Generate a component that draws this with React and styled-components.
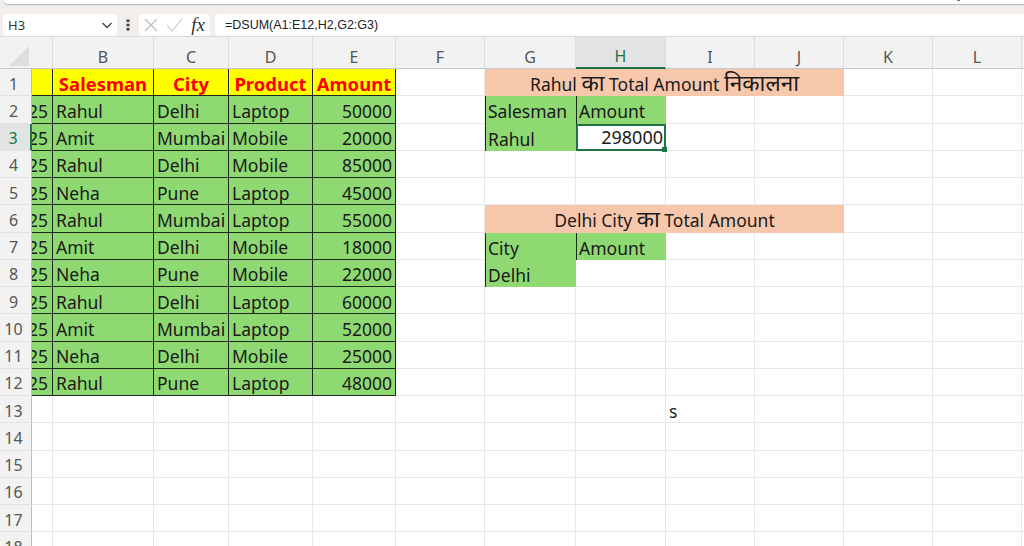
import React from "react";
import styled, { createGlobalStyle } from "styled-components";

const GlobalStyle = createGlobalStyle`
  html, body { margin: 0; padding: 0; background: #f1eeec; overflow: hidden; }
  body { font-family: "Noto Sans", "Liberation Sans", sans-serif; }
`;

const Page = styled.div`
  width: 1024px;
  height: 546px;
  overflow: hidden;
  display: flex;
  flex-direction: column;
`;

const Ribbon = styled.div`
  flex: none;
  position: relative;
  height: 4px;
  margin-left: 4px;
  background: #fff;
  border-radius: 0 0 0 7px;
  box-shadow: 0 1px 1px rgba(0, 0, 0, 0.25);
  &::after {
    content: "";
    position: absolute;
    left: 953px;
    top: 0;
    width: 3px;
    height: 1px;
    background: #777;
  }
`;

const FormulaRow = styled.div`
  flex: none;
  display: flex;
  align-items: center;
  height: 23px;
  margin-top: 9px;
  padding-left: 3px;
  border-bottom: 1px solid #dbd8d6;
`;

const NameBox = styled.div`
  width: 114px;
  height: 22px;
  background: #fff;
  border-radius: 4px;
  display: flex;
  align-items: center;
  justify-content: space-between;
  padding: 0 4px 0 5px;
  box-sizing: border-box;
  font-size: 13px;
  color: #333;
`;

const Dots = styled.div`
  width: 22px;
  display: flex;
  justify-content: center;
`;

const FxBox = styled.div`
  width: 71px;
  height: 22px;
  background: #fff;
  border-radius: 4px;
  display: flex;
  align-items: center;
  justify-content: space-between;
  padding: 0 5px;
  box-sizing: border-box;
  margin-right: 5px;
`;

const Fx = styled.span`
  font-family: "Liberation Serif", serif;
  font-style: italic;
  font-size: 19px;
  line-height: 1;
  color: #333;
`;

const FormulaInput = styled.div`
  flex: 1;
  height: 22px;
  background: #fff;
  border-radius: 4px 0 0 4px;
  display: flex;
  align-items: center;
  padding-left: 10px;
  font-family: "Liberation Sans", sans-serif;
  font-size: 12.5px;
  color: #222;
`;

const Sheet = styled.div`
  flex: none;
  display: grid;
  grid-template-columns: 32px 21px 101px 75px 84px 83px 89px 91px 90px 89px 89px 89px 89px 60px;
  grid-template-rows: 32px repeat(18, 27.25px);
  background: #fff;
`;

const Corner = styled.div`
  background: #f2f2f2;
  border-bottom: 1px solid #c8c8c8;
  position: relative;
  &::after {
    content: "";
    position: absolute;
    right: 3px;
    bottom: 2px;
    border-style: solid;
    border-width: 0 0 20px 20px;
    border-color: transparent transparent #dedede transparent;
  }
`;

const ColHead = styled.div`
  background: ${(p) => (p.$active ? "#e2e4e3" : "#f2f2f2")};
  border-right: 1px solid #dcdcdc;
  border-bottom: ${(p) => (p.$active ? "2px solid #217346" : "1px solid #c8c8c8")};
  color: ${(p) => (p.$active ? "#217346" : "#555")};
  display: flex;
  align-items: center;
  justify-content: center;
  padding-top: 8px;
  font-size: 16px;
  box-sizing: border-box;
`;

const RowHead = styled.div`
  background: ${(p) => (p.$active ? "#e2e4e3" : "#f2f2f2")};
  border-right: ${(p) => (p.$active ? "2px solid #217346" : "1px solid #b8bcc0")};
  border-bottom: 1px solid #e2e2e2;
  color: ${(p) => (p.$active ? "#217346" : "#555")};
  display: flex;
  align-items: center;
  justify-content: center;
  padding: 4px 4px 0 0;
  font-size: 16px;
  line-height: 1.2;
  box-sizing: border-box;
`;

const Cell = styled.div`
  box-sizing: border-box;
  min-width: 0;
  overflow: hidden;
  white-space: nowrap;
  display: flex;
  align-items: center;
  padding: 4px 3px 0;
  font-size: 17.5px;
  line-height: 1.2;
  color: #1a1a1a;
  border-right: 1px solid #e8e8e8;
  border-bottom: 1px solid #e8e8e8;
  justify-content: ${(p) => (p.$right ? "flex-end" : "flex-start")};
`;

const DataCell = styled(Cell)`
  background: #8fd973;
  border-right: 1px solid #1c2a1c;
  border-bottom: 1px solid #1c2a1c;
`;

const HeadCell = styled(DataCell)`
  background: #ffff00;
  color: #ff0000;
  font-weight: 700;
  font-size: 18.5px;
  justify-content: center;
  padding: 3px 0 0;
`;

const DateCell = styled(DataCell)`
  justify-content: flex-end;
  padding: 4px 4px 0 0;
`;

const Banner = styled(Cell)`
  grid-column: span 4;
  background: #f7c7ac;
  border: 0;
  overflow: visible;
  justify-content: center;
  padding-top: 1px;
`;

const Hindi = styled.span`
  font-size: 22.5px;
  line-height: 1;
`;

const GreenCell = styled(Cell)`
  background: #8fd973;
  border-right: 0;
  border-bottom: 0;
  border-left: 1px solid #1c2a1c;
  padding-left: 2px;
`;

const Selected = styled(Cell)`
  position: relative;
  overflow: visible;
  justify-content: flex-end;
  border: 2px solid #217346;
  padding: 2px 1px 0 0;
  font-size: 18px;
  &::after {
    content: "";
    position: absolute;
    right: -3px;
    bottom: -3px;
    width: 5px;
    height: 5px;
    background: #217346;
  }
`;

const columns = ["", "B", "C", "D", "E", "F", "G", "H", "I", "J", "K", "L", ""];

const sales = [
  ["Rahul", "Delhi", "Laptop", 50000],
  ["Amit", "Mumbai", "Mobile", 20000],
  ["Rahul", "Delhi", "Mobile", 85000],
  ["Neha", "Pune", "Laptop", 45000],
  ["Rahul", "Mumbai", "Laptop", 55000],
  ["Amit", "Delhi", "Mobile", 18000],
  ["Neha", "Pune", "Mobile", 22000],
  ["Rahul", "Delhi", "Laptop", 60000],
  ["Amit", "Mumbai", "Laptop", 52000],
  ["Neha", "Delhi", "Mobile", 25000],
  ["Rahul", "Pune", "Laptop", 48000],
];

// cells to the right of the table, F to M, for each row
function RightSide({ row }) {
  if (row === 1 || row === 6) {
    return (
      <>
        <Cell />
        {row === 1 ? (
          <Banner>
            <span>Rahul <Hindi>का</Hindi> Total Amount <Hindi>निकालना</Hindi></span>
          </Banner>
        ) : (
          <Banner>
            <span>Delhi City <Hindi>का</Hindi> Total Amount</span>
          </Banner>
        )}
        <Cell />
        <Cell />
        <Cell />
      </>
    );
  }
  const cells = { 2: ["Salesman", "Amount"], 3: ["Rahul"], 7: ["City", "Amount"], 8: ["Delhi"] }[row];
  return (
    <>
      <Cell />
      {cells ? <GreenCell>{cells[0]}</GreenCell> : <Cell />}
      {row === 3 ? (
        <Selected>298000</Selected>
      ) : cells && cells[1] ? (
        <GreenCell>{cells[1]}</GreenCell>
      ) : (
        <Cell />
      )}
      <Cell>{row === 13 ? "s" : ""}</Cell>
      <Cell />
      <Cell />
      <Cell />
      <Cell />
    </>
  );
}

function LeftSide({ row }) {
  if (row === 1) {
    return (
      <>
        <HeadCell />
        <HeadCell>Salesman</HeadCell>
        <HeadCell>City</HeadCell>
        <HeadCell>Product</HeadCell>
        <HeadCell>Amount</HeadCell>
      </>
    );
  }
  const sale = sales[row - 2];
  if (!sale) {
    return (
      <>
        <Cell />
        <Cell />
        <Cell />
        <Cell />
        <Cell />
      </>
    );
  }
  return (
    <>
      <DateCell>25</DateCell>
      <DataCell>{sale[0]}</DataCell>
      <DataCell>{sale[1]}</DataCell>
      <DataCell>{sale[2]}</DataCell>
      <DataCell $right>{sale[3]}</DataCell>
    </>
  );
}

export default function App() {
  const rows = Array.from({ length: 18 }, (_, i) => i + 1);
  return (
    <Page>
      <GlobalStyle />
      <Ribbon />
      <FormulaRow>
        <NameBox>
          H3
          <svg width="12" height="12" viewBox="0 0 12 12" fill="none" stroke="#444" strokeWidth="1.3">
            <path d="M1.5 4l4.5 4.5L10.5 4" />
          </svg>
        </NameBox>
        <Dots>
          <svg width="4" height="12" viewBox="0 0 4 12" fill="#444">
            <rect x="0.5" y="0.5" width="3" height="2.6" />
            <rect x="0.5" y="4.7" width="3" height="2.6" />
            <rect x="0.5" y="8.9" width="3" height="2.6" />
          </svg>
        </Dots>
        <FxBox>
          <svg width="14" height="14" viewBox="0 0 14 14" fill="none" stroke="#bdbdbd" strokeWidth="1.2">
            <path d="M1 1l12 12M13 1L1 13" />
          </svg>
          <svg width="17" height="14" viewBox="0 0 17 14" fill="none" stroke="#d2d2d2" strokeWidth="1.2">
            <path d="M1 7l5 6L16 1" />
          </svg>
          <Fx>fx</Fx>
        </FxBox>
        <FormulaInput>=DSUM(A1:E12,H2,G2:G3)</FormulaInput>
      </FormulaRow>
      <Sheet>
        <Corner />
        {columns.map((c, i) => (
          <ColHead key={i} $active={c === "H"}>{c}</ColHead>
        ))}
        {rows.map((row) => (
          <React.Fragment key={row}>
            <RowHead $active={row === 3}>{row}</RowHead>
            <LeftSide row={row} />
            <RightSide row={row} />
          </React.Fragment>
        ))}
      </Sheet>
    </Page>
  );
}
